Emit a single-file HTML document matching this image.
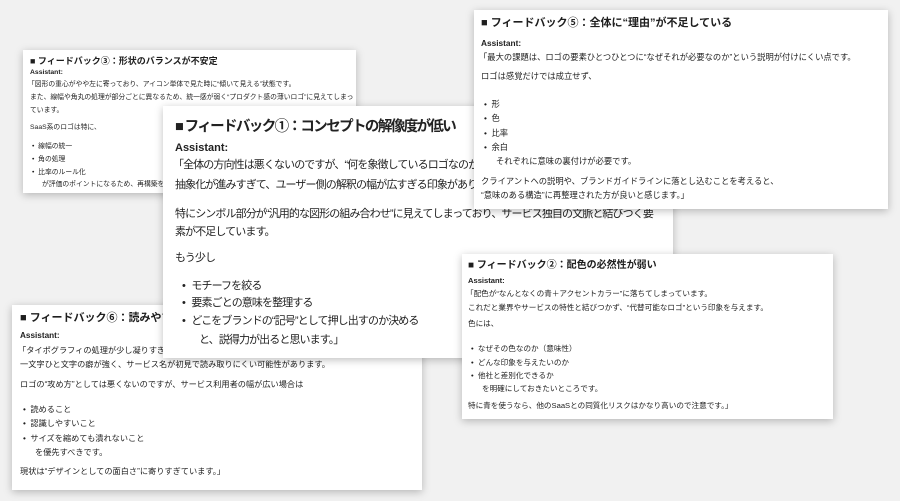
<!DOCTYPE html>
<html><head><meta charset="utf-8"><style>
*{margin:0;padding:0;box-sizing:border-box}
html,body{width:900px;height:501px;overflow:hidden;background:#f1f1f1}
body{position:relative;font-family:"Liberation Sans","Noto Sans CJK JP",sans-serif;color:#1e1e1e}
.c{position:absolute;background:#fff;box-shadow:0 2px 8px rgba(0,0,0,.25)}
.c div{position:absolute;white-space:nowrap}
.b{font-weight:bold}
</style></head><body>

<!-- card 3 -->
<div class="c" style="left:23px;top:50px;width:333px;height:143px;font-size:6.8px;line-height:10px">
<div class="b" style="left:7px;top:5px;font-size:9px;line-height:12px">■ フィードバック③：形状のバランスが不安定</div>
<div class="b" style="left:7px;top:18px">Assistant:</div>
<div style="left:5px;top:30px">「図形の重心がやや左に寄っており、アイコン単体で見た時に“傾いて見える”状態です。</div>
<div style="left:7px;top:43px">また、線幅や角丸の処理が部分ごとに異なるため、統一感が弱く“プロダクト感の薄いロゴ”に見えてしまっ</div>
<div style="left:7px;top:56px">ています。</div>
<div style="left:7px;top:73px">SaaS系のロゴは特に、</div>
<div style="left:9px;top:92px">•&nbsp;&nbsp;線幅の統一</div>
<div style="left:9px;top:105px">•&nbsp;&nbsp;角の処理</div>
<div style="left:9px;top:118px">•&nbsp;&nbsp;比率のルール化</div>
<div style="left:19px;top:130px">が評価のポイントになるため、再構築を</div>
</div>

<!-- card 4 -->
<div class="c" style="left:12px;top:305px;width:410px;height:185px;font-size:8.2px;line-height:12px">
<div class="b" style="left:8px;top:6px;font-size:11px;line-height:14px">■ フィードバック⑥：読みやすさ</div>
<div class="b" style="left:8px;top:25px">Assistant:</div>
<div style="left:6px;top:40px">「タイポグラフィの処理が少し凝りすぎていて、</div>
<div style="left:8px;top:54px">一文字ひと文字の癖が強く、サービス名が初見で読み取りにくい可能性があります。</div>
<div style="left:8px;top:74px">ロゴの“攻め方”としては悪くないのですが、サービス利用者の幅が広い場合は</div>
<div style="left:11px;top:99px">•&nbsp;&nbsp;読めること</div>
<div style="left:11px;top:113px">•&nbsp;&nbsp;認識しやすいこと</div>
<div style="left:11px;top:128px">•&nbsp;&nbsp;サイズを縮めても潰れないこと</div>
<div style="left:23px;top:142px">を優先すべきです。</div>
<div style="left:8px;top:161px">現状は“デザインとしての面白さ”に寄りすぎています。」</div>
</div>

<!-- card 1 -->
<div class="c" style="left:163px;top:106px;width:510px;height:252px;font-size:11px;line-height:16px;letter-spacing:-0.9px;color:#222">
<div class="b" style="left:12px;top:11px;font-size:14.5px;line-height:20px;letter-spacing:-1.6px">■ フィードバック①：コンセプトの解像度が低い</div>
<div class="b" style="left:12px;top:34px;letter-spacing:0">Assistant:</div>
<div style="left:10px;top:51px">「全体の方向性は悪くないのですが、“何を象徴しているロゴなのか”が伝わりにくいです。</div>
<div style="left:12px;top:71px">抽象化が進みすぎて、ユーザー側の解釈の幅が広すぎる印象があります。</div>
<div style="left:12px;top:100px">特にシンボル部分が“汎用的な図形の組み合わせ”に見えてしまっており、サービス独自の文脈と結びつく要</div>
<div style="left:12px;top:118px">素が不足しています。</div>
<div style="left:12px;top:144px">もう少し</div>
<div style="left:19px;top:172px">•&nbsp;&nbsp;&nbsp;モチーフを絞る</div>
<div style="left:19px;top:189px">•&nbsp;&nbsp;&nbsp;要素ごとの意味を整理する</div>
<div style="left:19px;top:207px">•&nbsp;&nbsp;&nbsp;どこをブランドの“記号”として押し出すのか決める</div>
<div style="left:36px;top:226px">と、説得力が出ると思います。」</div>
</div>

<!-- card 5 -->
<div class="c" style="left:474px;top:10px;width:414px;height:199px;font-size:8.3px;line-height:12px">
<div class="b" style="left:7px;top:6px;font-size:11px;line-height:14px">■ フィードバック⑤：全体に“理由”が不足している</div>
<div class="b" style="left:7px;top:27px">Assistant:</div>
<div style="left:5px;top:41px">「最大の課題は、ロゴの要素ひとつひとつに“なぜそれが必要なのか”という説明が付けにくい点です。</div>
<div style="left:7px;top:60px">ロゴは感覚だけでは成立せず、</div>
<div style="left:10px;top:88px">•&nbsp;&nbsp;形</div>
<div style="left:10px;top:102px">•&nbsp;&nbsp;色</div>
<div style="left:10px;top:117px">•&nbsp;&nbsp;比率</div>
<div style="left:10px;top:131px">•&nbsp;&nbsp;余白</div>
<div style="left:22px;top:145px">それぞれに意味の裏付けが必要です。</div>
<div style="left:7px;top:165px">クライアントへの説明や、ブランドガイドラインに落とし込むことを考えると、</div>
<div style="left:7px;top:179px">“意味のある構造”に再整理された方が良いと感じます。」</div>
</div>

<!-- card 2 -->
<div class="c" style="left:462px;top:254px;width:371px;height:165px;font-size:7.6px;line-height:11px">
<div class="b" style="left:6px;top:5px;font-size:10px;line-height:13px">■ フィードバック②：配色の必然性が弱い</div>
<div class="b" style="left:6px;top:21px">Assistant:</div>
<div style="left:4px;top:34px">「配色が“なんとなくの青＋アクセントカラー”に落ちてしまっています。</div>
<div style="left:6px;top:48px">これだと業界やサービスの特性と結びつかず、“代替可能なロゴ”という印象を与えます。</div>
<div style="left:6px;top:64px">色には、</div>
<div style="left:9px;top:89px">•&nbsp;&nbsp;なぜその色なのか（意味性）</div>
<div style="left:9px;top:103px">•&nbsp;&nbsp;どんな印象を与えたいのか</div>
<div style="left:9px;top:116px">•&nbsp;&nbsp;他社と差別化できるか</div>
<div style="left:20px;top:129px">を明確にしておきたいところです。</div>
<div style="left:6px;top:146px">特に青を使うなら、他のSaaSとの同質化リスクはかなり高いので注意です。」</div>
</div>

</body></html>
